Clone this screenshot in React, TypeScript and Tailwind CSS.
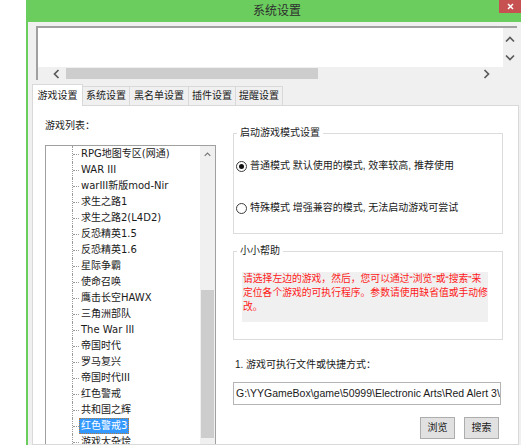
import React from 'react';

const games = [
  'RPG地图专区(网通)',
  'WAR III',
  'warIII新版mod-Nir',
  '求生之路1',
  '求生之路2(L4D2)',
  '反恐精英1.5',
  '反恐精英1.6',
  '星际争霸',
  '使命召唤',
  '鹰击长空HAWX',
  '三角洲部队',
  'The War III',
  '帝国时代',
  '罗马复兴',
  '帝国时代III',
  '红色警戒',
  '共和国之辉',
  '红色警戒3',
  '游戏大杂烩',
];
const selected = '红色警戒3';

const tabs = [
  { label: '游戏设置', w: 'w-[51px]' },
  { label: '系统设置', w: 'w-[48px]' },
  { label: '黑名单设置', w: 'w-[60px]' },
  { label: '插件设置', w: 'w-[48px]' },
  { label: '提醒设置', w: 'w-[48px]' },
];

type Dir = 'up' | 'down' | 'left' | 'right';

function Chevron({ dir, className }: { dir: Dir; className?: string }) {
  const horiz = dir === 'left' || dir === 'right';
  const pts = {
    up: '1,5.5 5,1.5 9,5.5',
    down: '1,1.5 5,5.5 9,1.5',
    left: '5.5,1 1.5,5 5.5,9',
    right: '1.5,1 5.5,5 1.5,9',
  }[dir];
  return (
    <svg
      width={horiz ? 7 : 10}
      height={horiz ? 10 : 7}
      viewBox={horiz ? '0 0 7 10' : '0 0 10 7'}
      className={className}
    >
      <polyline points={pts} fill="none" stroke="currentColor" strokeWidth="1.7" />
    </svg>
  );
}

function Radio({ checked }: { checked?: boolean }) {
  return (
    <span className="w-[11px] h-[11px] rounded-full border border-[#3c3c3c] bg-white flex items-center justify-center shrink-0">
      {checked && <span className="w-[5px] h-[5px] rounded-full bg-[#111]" />}
    </span>
  );
}

export default function App() {
  return (
    <div className="w-[521px] h-[445px] overflow-hidden bg-white flex pl-[26px] font-['Liberation_Sans','Noto_Sans_CJK_SC',sans-serif] text-[10px] text-[#1a1a1a]">
      <div className="flex-1 flex flex-col bg-[#6bcd5e] pl-[2px] min-w-0">
        {/* title bar */}
        <div className="h-[22px] shrink-0 relative flex items-center justify-center pl-[5px]">
          <span className="text-[12px] leading-[14px] text-[#2e2e2e]">系统设置</span>
          <div className="absolute right-0 top-0 w-[22px] h-[13px] bg-[#c75050] flex items-center justify-center">
            <svg width="7" height="7" viewBox="0 0 7 7">
              <path d="M1 1 L6 6 M6 1 L1 6" stroke="white" strokeWidth="1.5" />
            </svg>
          </div>
        </div>

        {/* body */}
        <div className="flex-1 min-h-0 bg-[#f0f0f0] flex flex-col">
          {/* top text box */}
          <div className="mt-[4px] ml-[8px] mr-[4px] h-[54px] shrink-0 border-t-2 border-l-2 border-[#a0a0a0] bg-white flex flex-col">
            <div className="flex flex-1">
              <div className="flex-1" />
              <div className="w-[14px] bg-[#f0f0f0] flex flex-col items-center text-[#5a5a5a]">
                <Chevron dir="up" className="mt-[8px]" />
                <Chevron dir="down" className="mt-[11px]" />
              </div>
            </div>
            <div className="h-[13px] flex bg-[#f0f0f0] text-[#5a5a5a]">
              <div className="w-[28px] flex items-center justify-end pr-[6px]">
                <Chevron dir="left" />
              </div>
              <div className="w-[252px] my-[1px] bg-[#cdcdcd]" />
              <div className="flex-1 flex items-center justify-end pr-[27px]">
                <Chevron dir="right" />
              </div>
            </div>
          </div>

          {/* tabs */}
          <div className="mt-[4px] h-[21px] shrink-0 flex items-end pl-[4px]">
            {tabs.map((t, i) =>
              i === 0 ? (
                <div
                  key={t.label}
                  className={`${t.w} h-[22px] -mb-px relative z-10 bg-white border border-b-0 border-[#d9d9d9] flex items-center justify-center leading-[12px]`}
                >
                  {t.label}
                </div>
              ) : (
                <div
                  key={t.label}
                  className={`${t.w} h-[19px] -ml-px bg-[#f0f0f0] border border-b-0 border-[#d9d9d9] flex items-center justify-center leading-[12px]`}
                >
                  {t.label}
                </div>
              )
            )}
          </div>

          {/* panel */}
          <div className="flex-1 min-h-0 ml-[4px] mr-[2px] bg-white border border-[#d9d9d9] flex overflow-hidden">
            {/* left column */}
            <div className="w-[183px] shrink-0 pl-[12px] pt-[14px] flex flex-col">
              <div className="leading-[12px]">游戏列表：</div>
              <div className="mt-[13px] w-[171px] h-[320px] shrink-0 border border-[#a0a0a0] flex">
                <div className="flex-1 flex flex-col font-['DejaVu_Sans','Noto_Sans_CJK_SC',sans-serif] text-[10px]">
                  {games.map((g) => (
                    <div key={g} className="h-[16px] shrink-0 flex items-stretch">
                      <div className="w-[26px] shrink-0" />
                      <div className="w-[7px] shrink-0 border-l border-dotted border-[#9a9a9a] flex items-center">
                        <div className="w-full border-t border-dotted border-[#9a9a9a]" />
                      </div>
                      {g === selected ? (
                        <span className="px-[1px] leading-[14px] whitespace-nowrap bg-[#3399ff] text-white border border-dotted border-[#b87a3c]">
                          {g}
                        </span>
                      ) : (
                        <span className="px-[2px] leading-[16px] whitespace-nowrap">{g}</span>
                      )}
                    </div>
                  ))}
                </div>
                <div className="w-[15px] shrink-0 bg-[#f0f0f0] flex flex-col">
                  <div className="h-[17px] flex items-center justify-center text-[#777]">
                    <Chevron dir="up" className="w-[7px] h-[5px]" />
                  </div>
                  <div className="mt-[127px] mx-[1px] h-[148px] bg-[#cdcdcd]" />
                </div>
              </div>
            </div>

            {/* right column */}
            <div className="ml-[17px] w-[270px] shrink-0 pt-[27px] flex flex-col">
              <div className="relative h-[101px] shrink-0 border border-[#dcdcdc]">
                <span className="absolute left-[3px] -top-[7px] px-[3px] bg-white leading-[12px] text-[#222]">
                  启动游戏模式设置
                </span>
                <div className="pt-[26px] pl-[2px] flex flex-col">
                  <div className="h-[12px] flex items-center gap-[3px] leading-[12px] whitespace-nowrap">
                    <Radio checked />
                    <span>普通模式 默认使用的模式, 效率较高, 推荐使用</span>
                  </div>
                  <div className="mt-[30px] h-[12px] flex items-center gap-[3px] leading-[12px] whitespace-nowrap">
                    <Radio />
                    <span>特殊模式 增强兼容的模式, 无法启动游戏可尝试</span>
                  </div>
                </div>
              </div>

              <div className="relative mt-[17px] h-[89px] shrink-0 border border-[#dcdcdc]">
                <span className="absolute left-[3px] -top-[7px] px-[3px] bg-white leading-[12px] text-[#222]">
                  小小帮助
                </span>
                <div className="mt-[20px] ml-[8px] w-[246px] h-[50px] bg-[#f0f0f0] pl-[1px] text-[9.8px] leading-[14px] text-[#ff1a1a] whitespace-nowrap">
                  请选择左边的游戏，然后，您可以通过“浏览”或“搜索”来
                  <br />
                  定位各个游戏的可执行程序。参数请使用缺省值或手动修
                  <br />
                  改。
                </div>
              </div>

              <div className="mt-[19px] pl-[2px] leading-[12px]">1. 游戏可执行文件或快捷方式：</div>
              <div className="mt-[11px] w-[268px] h-[23px] shrink-0 border border-[#b5b5b5] bg-white pl-[2px] overflow-hidden whitespace-nowrap text-[10.5px] leading-[21px]">
                G:\YYGameBox\game\50999\Electronic Arts\Red Alert 3\
              </div>
              <div className="mt-[12px] flex justify-end gap-[9px] pr-[4px]">
                <div className="w-[35px] h-[22px] bg-[#e1e1e1] border border-[#adadad] flex items-center justify-center leading-[12px]">
                  浏览
                </div>
                <div className="w-[35px] h-[22px] bg-[#e1e1e1] border border-[#adadad] flex items-center justify-center leading-[12px]">
                  搜索
                </div>
              </div>
            </div>
          </div>
        </div>
      </div>
    </div>
  );
}
